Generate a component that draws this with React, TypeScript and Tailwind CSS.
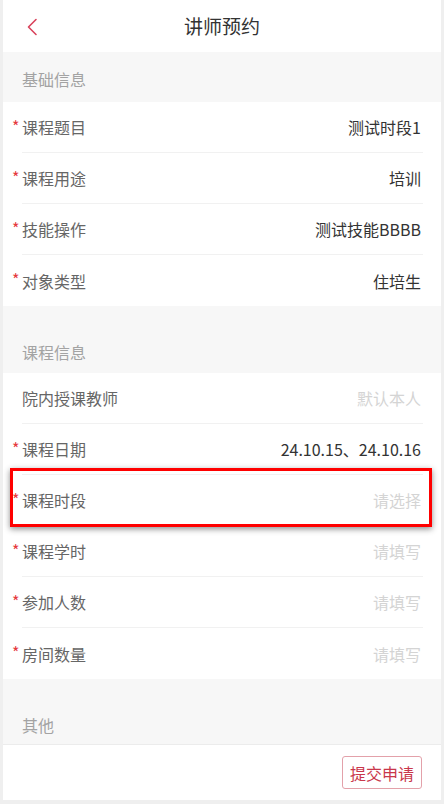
import React from 'react';

const font = { fontFamily: '"Noto Sans CJK SC", "Noto Sans", sans-serif' };

type RowProps = { label: string; value: string; required?: boolean; placeholder?: boolean; last?: boolean };

const Row = ({ label, value, required, placeholder, last }: RowProps) => (
    <div className="bg-white pl-[19px] pr-[18px]">
        <div className={`relative h-[51px] flex items-center justify-between pr-[2px] ${last ? '' : 'border-b border-[#f1f1f1]'}`}>
            {required && <span className="absolute left-[-10px] top-[14px] text-[16px] leading-[20px] text-[#e5383d]">*</span>}
            <span className="text-[16px] text-[#666666]">{label}</span>
            <span className={`text-[16px] ${placeholder ? 'text-[#d4d4d4]' : 'text-[#333333]'}`}>{value}</span>
        </div>
    </div>
);

const SectionTitle = ({ title, className }: { title: string; className: string }) => (
    <div className={`bg-[#f7f7f7] pl-[19px] text-[16px] leading-[24px] text-[#a3a3a3] ${className}`}>{title}</div>
);

export default function App() {
    return (
        <div className="relative h-[804px] bg-[#efefef] px-[3px] pb-[4px]" style={font}>
            <div className="h-full bg-white flex flex-col">
                <div className="relative h-[52px] flex items-center justify-center bg-white">
                    <svg className="absolute left-[22px] top-[18px]" width="14" height="18" viewBox="0 0 14 18" fill="none">
                        <polyline points="11,1.5 3.5,9 11,16.5" stroke="#d9435c" strokeWidth="1.6" strokeLinecap="round" strokeLinejoin="round" />
                    </svg>
                    <span className="text-[19px] text-[#333333]">讲师预约</span>
                </div>

                <SectionTitle title="基础信息" className="h-[50px] pt-[15px]" />
                <Row required label="课程题目" value="测试时段1" />
                <Row required label="课程用途" value="培训" />
                <Row required label="技能操作" value="测试技能BBBB" />
                <Row required label="对象类型" value="住培生" last />

                <SectionTitle title="课程信息" className="h-[67px] pt-[34px]" />
                <Row label="院内授课教师" value="默认本人" placeholder />
                <Row required label="课程日期" value="24.10.15、24.10.16" />
                <Row required label="课程时段" value="请选择" placeholder />
                <Row required label="课程学时" value="请填写" placeholder />
                <Row required label="参加人数" value="请填写" placeholder />
                <Row required label="房间数量" value="请填写" placeholder last />

                <SectionTitle title="其他" className="h-[66px] pt-[34px] border-b border-[#ececec]" />
                <div className="flex-1 flex justify-end items-start pt-[11px] pr-[19px]">
                    <button className="h-[33px] px-[7px] border border-[#e3a1aa] rounded-[3px] text-[16px] text-[#c9374b] bg-white">提交申请</button>
                </div>
            </div>

            <div className="absolute left-[10px] top-[468px] w-[422px] h-[59px] border-[3px] border-[#ff0000] shadow-[0_2px_6px_rgba(0,0,0,0.45)]" />
        </div>
    );
}
